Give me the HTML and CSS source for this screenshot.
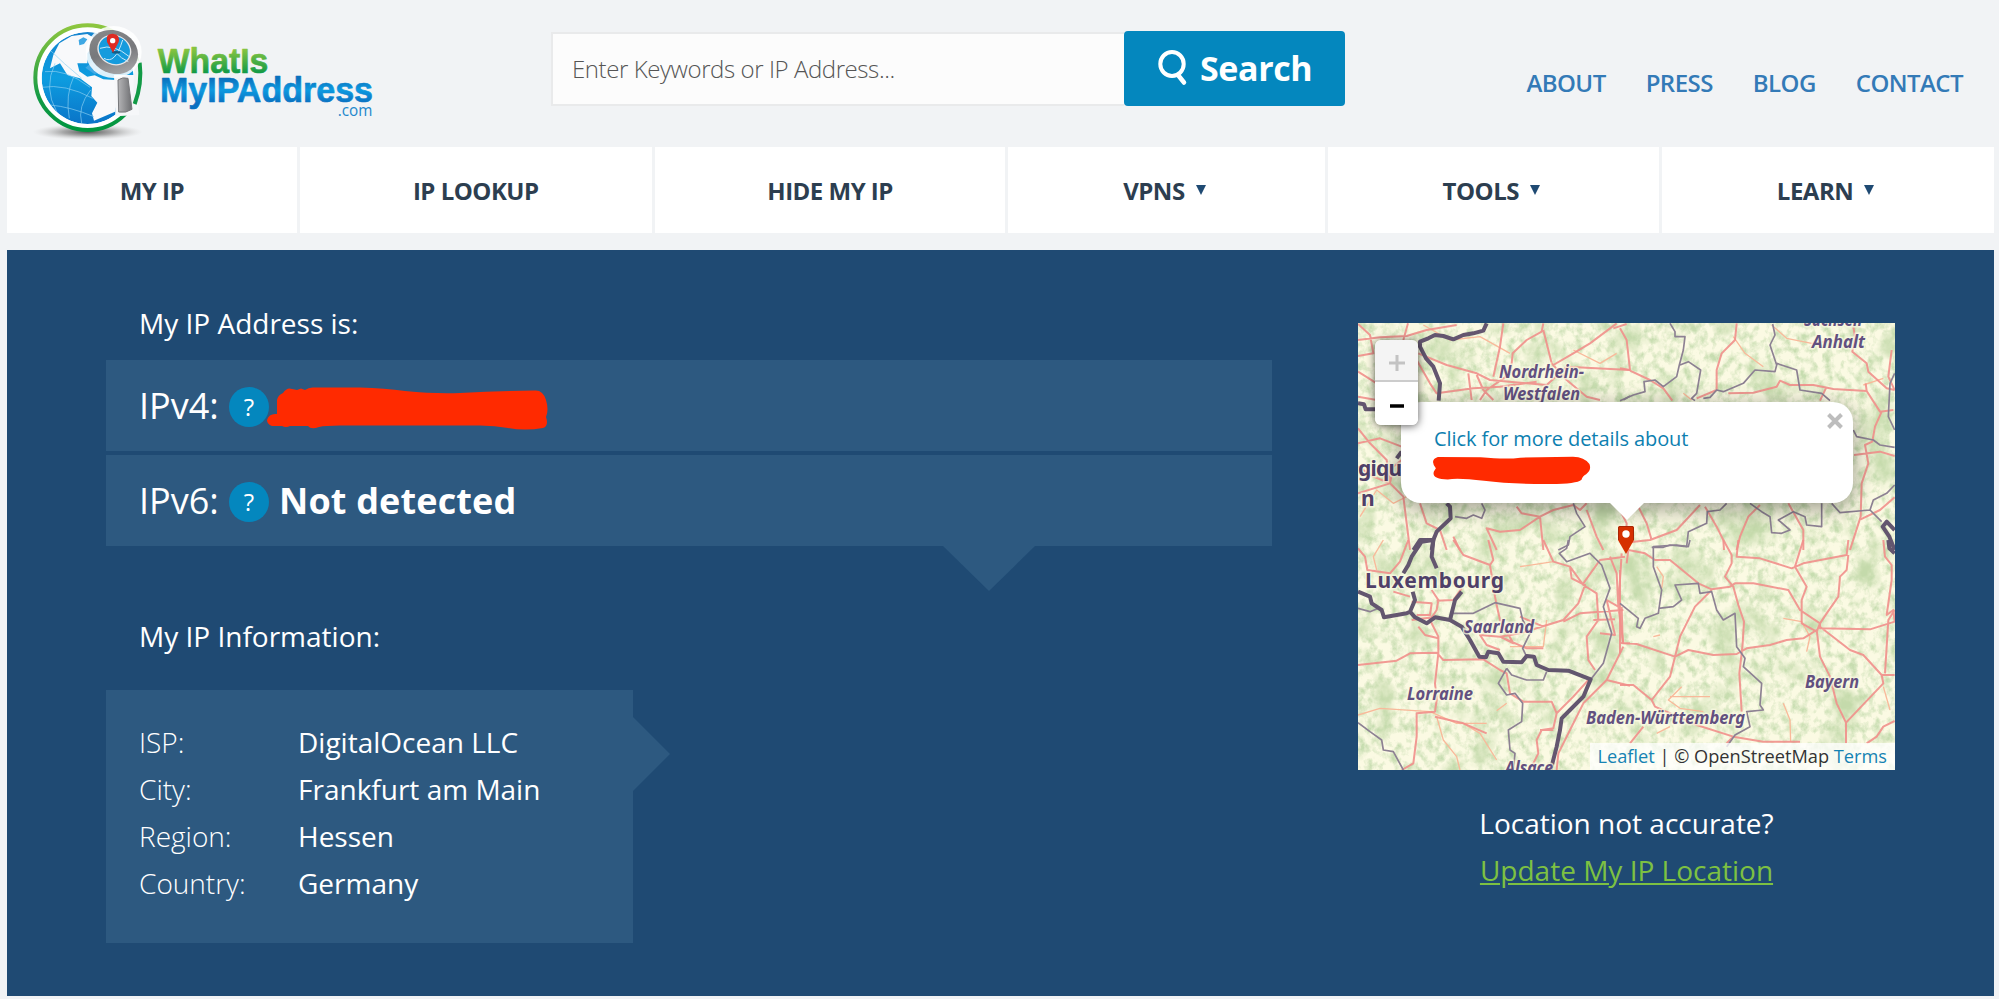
FILE: index.html
```html
<!DOCTYPE html>
<html lang="en">
<head>
<meta charset="utf-8">
<title>What Is My IP Address</title>
<link rel="stylesheet" href="styles.css">
</head>
<body>
<header class="header">
  <a class="logo">
    <svg width="420" height="147" viewBox="0 0 1260 441" role="img" aria-label="WhatIsMyIPAddress.com">
      <defs>
        <linearGradient id="ring" x1="0" y1="0" x2="0" y2="1"><stop offset="0" stop-color="#8dc63f"/><stop offset=".7" stop-color="#129a46"/><stop offset="1" stop-color="#00963f"/></linearGradient>
        <linearGradient id="sea" x1="0" y1="0" x2="0" y2="1"><stop offset="0" stop-color="#1684cf"/><stop offset=".5" stop-color="#0d9de0"/><stop offset="1" stop-color="#0a74c8"/></linearGradient>
        <linearGradient id="steel" x1="0" y1="0" x2="1" y2="1"><stop offset="0" stop-color="#8c8c8e"/><stop offset=".5" stop-color="#77787b"/><stop offset="1" stop-color="#b5b5b7"/></linearGradient>
        <linearGradient id="grip" x1="0" y1="0" x2="1" y2="0"><stop offset="0" stop-color="#b5b5b7"/><stop offset="1" stop-color="#6d6e71"/></linearGradient>
        <linearGradient id="greenText" x1="0" y1="0" x2="0" y2="1"><stop offset=".2" stop-color="#86c440"/><stop offset=".85" stop-color="#0a9847"/></linearGradient>
        <linearGradient id="blueText" x1="0" y1="0" x2="0" y2="1"><stop offset=".2" stop-color="#0a71bd"/><stop offset=".5" stop-color="#0d9ae0"/><stop offset=".85" stop-color="#0a6fc0"/></linearGradient>
        <radialGradient id="shade"><stop offset="0" stop-color="#555"/><stop offset=".45" stop-color="#888" stop-opacity=".7"/><stop offset="1" stop-color="#ccc" stop-opacity="0"/></radialGradient>
        <clipPath id="disc"><circle cx="263" cy="234" r="138"/></clipPath>
      </defs>
      <ellipse cx="263" cy="396" rx="165" ry="24" fill="url(#shade)"/>
      <circle cx="263" cy="233" r="157" fill="#fff" stroke="url(#ring)" stroke-width="12"/>
      <g clip-path="url(#disc)">
        <circle cx="263" cy="234" r="138" fill="url(#sea)"/>
        <path d="M160 165 L150 205 L180 190 L202 225 L240 235 L276 262 L274 288 L292 308 L276 340 L282 362 L345 335 L345 240 L310 238 L284 226 L262 230 L238 214 L232 190 L262 190 L262 160 L292 120 L262 102 L215 108 L178 130 Z" fill="#f8f9fb"/>
        <path d="M236 120l14-8 12 6-10 14-14 4zM256 203l22-18 12 14 20 14-26 10z" fill="#3fa8e4"/>
        <path d="M125 262Q195 250 278 295M135 215Q195 205 270 262M150 315Q210 320 282 350M165 190Q130 265 170 335M222 228Q195 285 208 355M272 270Q232 320 245 370M150 150Q190 190 245 235" fill="none" stroke="#8ed0f2" stroke-width="2"/>
      </g>
      <path d="M342 225h62l14 120-72 4z" fill="#f6f7f9"/>
      <path d="M404 184L430 184L430 300L398 318" fill="#f1f3f5"/>
      <path d="M419 188Q427 250 404 312" fill="none" stroke="#129a46" stroke-width="12"/>
      <ellipse cx="341" cy="156" rx="84" ry="78" fill="#fff" opacity=".85"/>
      <ellipse cx="341" cy="156" rx="75" ry="64" transform="rotate(25 341 156)" fill="url(#steel)"/>
      <ellipse cx="343" cy="150" rx="50" ry="43" transform="rotate(25 343 150)" fill="#159bdd" stroke="#e6e6e8" stroke-width="4"/>
      <path d="M300 145Q340 130 388 170M312 175Q345 195 368 120M330 120Q340 165 385 185" fill="none" stroke="#c5e8fa" stroke-width="3"/>
      <ellipse cx="348" cy="157" rx="13" ry="4" fill="#135c86"/>
      <path d="M339 158L321 126Q315 101 338 101Q361 102 356 126Z" fill="#df2b23"/>
      <circle cx="338" cy="122" r="8" fill="#fff"/>
      <path d="M354 240Q368 230 384 235L396 328Q378 340 356 336Z" fill="url(#grip)" stroke="#77787b" stroke-width="3"/>
      <text class="logo-word" x="473" y="219" font-size="104" textLength="332" lengthAdjust="spacingAndGlyphs" fill="url(#greenText)" stroke="url(#greenText)">WhatIs</text>
      <text class="logo-word" x="480" y="306" font-size="104" textLength="639" lengthAdjust="spacingAndGlyphs" fill="url(#blueText)" stroke="url(#blueText)">MyIPAddress</text>
      <text class="logo-tld" x="1013" y="348" font-size="50" textLength="104" lengthAdjust="spacingAndGlyphs">.com</text>
    </svg>
  </a>
  <form class="search">
    <div class="search-field">Enter Keywords or IP Address...</div>
    <div class="search-button">
      <svg width="30" height="36" viewBox="0 0 30 36"><ellipse cx="14" cy="14" rx="11.7" ry="12" fill="none" stroke="#fff" stroke-width="4"/><path d="M20 25l6 7.500" stroke="#fff" stroke-width="4.500" stroke-linecap="round"/></svg>
      <span>Search</span>
    </div>
  </form>
  <div class="links"><a>ABOUT</a><a>PRESS</a><a>BLOG</a><a>CONTACT</a></div>
</header>

<nav class="nav">
  <a>MY IP</a><a>IP LOOKUP</a><a>HIDE MY IP</a>
  <a>VPNS<i class="caret"></i></a><a>TOOLS<i class="caret"></i></a><a>LEARN<i class="caret"></i></a>
</nav>

<main class="panel">
  <section class="details">
    <h2>My IP Address is:</h2>
    <div class="addresses">
      <div class="address"><span class="label">IPv4:</span><b class="help">?</b>
        <svg class="mark" width="284" height="48" viewBox="265 384 284 48"><path fill="#ff2a00" d="M277 413V400Q278 395 283 393Q287 387 292 389L297 390L301 388.500L305 390Q309 387 314 387.500H360Q385 388 405 391Q435 394 460 393Q500 391 535 390.500Q543 390 546 400Q549 410 546 417Q549 426 543 428Q525 431 508 428Q495 425.500 480 425.500H340Q325 425.500 319 427Q311 430 308 426L290 426Q286 428 282 426H272Q267 424 267 420Q269 413 277 414Z"/></svg>
      </div>
      <div class="address"><span class="label">IPv6:</span><b class="help">?</b><strong>Not detected</strong></div>
    </div>
    <h2 class="info-title">My IP Information:</h2>
    <dl class="info">
      <dt>ISP:</dt><dd>DigitalOcean LLC</dd>
      <dt>City:</dt><dd>Frankfurt am Main</dd>
      <dt>Region:</dt><dd>Hessen</dd>
      <dt>Country:</dt><dd>Germany</dd>
    </dl>
  </section>

  <aside class="location">
    <div class="map">
      <svg class="tiles" width="537" height="447" viewBox="0 0 537 447">
        <defs>
          <filter id="woods" x="0" y="0" width="100%" height="100%" color-interpolation-filters="sRGB">
            <feTurbulence type="fractalNoise" baseFrequency=".12 .1" numOctaves="4" seed="8"/>
            <feColorMatrix values="0 0 0 0 .78  0 0 0 0 .865  0 0 0 0 .69  2.600 0 0 0 -1.100"/>
          </filter>
          <filter id="regions" x="0" y="0" width="100%" height="100%" color-interpolation-filters="sRGB">
            <feTurbulence type="fractalNoise" baseFrequency=".026 .022" numOctaves="5" seed="21"/>
            <feColorMatrix values="0 0 0 0 .77  0 0 0 0 .855  0 0 0 0 .67  0 3 0 0 -1.550"/>
          </filter>
        </defs>
        <rect width="537" height="447" fill="#fbfae3"/>
        <rect width="537" height="447" filter="url(#woods)"/>
        <rect width="537" height="447" filter="url(#regions)"/>
        <!-- north-west -->
        <g transform="translate(-18 -13) scale(.33333)">
          <path class="minor" d="M250 45L330 90L420 80L510 130M700 120L780 160L830 130M60 620L110 540L160 580L200 560"/>
          <path class="road" d="M54 42L90 75L100 130L54 138M54 90L120 82L200 78L260 60L350 45M204 40L190 90M235 130L320 165L410 190L450 210L620 225L680 170L870 180M490 40L480 110L460 200M610 40L605 65L560 90L518 130L512 190L440 240L420 270M610 60L635 160L680 210L740 260L780 270M830 40L750 100L700 130L640 165M860 42L820 55M230 150L270 220L290 250L400 235L480 230L590 215M54 260L110 270M54 185L110 220M410 195L430 240L460 270M385 190L395 270M54 355L90 400L140 450L150 520L190 560L200 640L210 720M54 400L120 385L185 410M54 470L100 500L150 520L160 470L185 450M54 550L150 520M240 580L260 640L300 660L320 720M530 590L545 610L600 620L640 600L700 585L720 600L740 580M600 620L540 660L480 665L440 655L470 720M600 620L610 720M740 600L770 680L790 720M340 680L360 720"/>
          <path class="border" d="M345 620L380 625L400 615L425 625L435 600L425 580M700 580L710 610L735 650L690 680L685 705L655 720M870 258L850 270"/>
          <path class="country" d="M440 40L430 62L400 70L370 75L340 88L310 78L285 75L265 85L240 95L240 110L258 145L280 170L300 220L296 272M54 280L72 283L77 298L110 298M320 580L330 590L332 625L290 665L280 690L240 690L220 720M280 690L275 720M185 425L170 445"/>
        </g>
        <!-- north-east -->
        <g transform="translate(262 -13) scale(.33333)">
          <path class="minor" d="M340 80L375 130L430 170M455 45L500 85L575 100L640 92M190 250L215 270M730 225L790 205"/>
          <path class="road" d="M0 55L20 90L30 180L0 175M30 182L90 210L130 235L157 272M350 40L345 90L305 130L290 180L290 240L230 265M325 250L400 248L470 230L480 212L510 225L580 225L640 237L740 243L737 220M740 243L780 305L820 300M700 50L705 80L697 125L740 160L745 185L800 235L824 240M815 120L805 200L824 240M785 305L765 350L757 395L735 405L745 460L725 520L722 620L690 720M702 435L780 425L824 438M620 230L600 272M824 562L780 600L722 628M55 590L80 640L95 690M0 700L90 690L170 660L240 585M255 590L290 650L310 690L312 720M420 585L385 620L360 680L350 720M505 580L550 660L550 720M0 600L20 640L15 720"/>
          <path class="border" d="M150 40L165 65L165 80L195 80L190 120L178 165L170 200L130 230L105 210L72 215L75 245L40 255L0 272M180 165L205 155L242 180L230 250L215 265L225 272M458 42L465 75L450 105L470 165L465 185L405 180L370 220L310 245L290 240L270 262L250 265M470 160L530 180L540 240L605 250L630 272M824 190L810 220L805 320L824 360M700 360L710 380L760 390L780 405L824 412M635 580L660 608L750 600L760 570L800 550L824 525M750 600L785 635M320 580L300 600L262 605L260 640L205 665L200 710L150 705L130 712L95 712M390 580L425 605L450 620L455 668L485 670L510 660L475 630L520 605L555 620L560 645L605 650L605 580"/>
          <path class="country" d="M824 660L800 635L788 650L808 680L824 720"/>
        </g>
        <!-- south-west -->
        <g transform="translate(-18 217) scale(.33333)">
          <path class="minor" d="M54 525L120 505L270 515L350 550L440 550M290 530L310 600L350 650L360 690M370 550L420 580L470 660M130 0L100 50L110 90M540 80L640 65M620 240L610 320L510 320M500 490L470 512"/>
          <path class="road" d="M54 25L75 50L82 90L150 100L180 65L205 0M340 0L370 45L450 75L465 170L470 195L480 240L520 310L480 290L420 285L440 315L480 330M445 0L460 60L450 75M610 0L640 65L690 80L730 135L770 160L775 240L740 290L745 360L765 390M690 80L695 115L735 135L715 190L670 240L540 280L480 290L560 325L610 325M730 130L780 60L855 50M670 245L720 220L850 210M760 240L825 238M845 40L835 200L850 310L870 310M810 50L830 100L835 200L800 180L825 285L780 280M215 185L275 190L270 225L230 225M160 155L210 170M290 230L215 240M275 150L295 180L290 210L270 240L295 290L295 340L285 430L290 480L285 515L230 520L230 590L220 670L185 690M54 375L170 362L210 340L290 338L310 360L430 358L480 390L500 400L510 460L550 485L635 485L650 520L640 565L605 570L590 600L595 640L570 690M650 520L700 470L745 420M640 570L600 570M650 690L655 640L690 570L730 490L800 420L850 320M800 420L870 437M285 530L370 550L440 580M235 260L255 285L295 295M365 145L340 180L290 182M540 230L610 260"/>
          <path class="border" d="M335 220L400 220L465 188L540 205L548 240L570 280L548 325L560 350M54 205L90 215L115 205M685 0L680 25L658 40L680 65L750 40L785 75L810 145L790 200L815 280L790 370L755 415M500 385L515 405L560 420L610 420L620 395M500 385L475 430L500 465L525 460L548 490L545 545L505 570L510 630L525 640L520 690M54 548L90 575L125 600L130 630L160 635L190 690"/>
          <path class="country" d="M290 85L275 50L280 0L245 5L215 50L205 75L190 100M54 155L90 170L95 190L125 210L132 232L200 220L210 215L225 180L218 155M210 215L225 232L260 250L285 232L330 240L365 260L390 300L418 350L438 352L445 335L475 340L490 365L545 367L560 348L582 350L590 375L625 390L685 392L752 418L730 470L690 510L665 535L660 570L650 620L632 690M365 155L345 180L330 240"/>
        </g>
        <!-- south-east -->
        <g transform="translate(262 217) scale(.33333)">
          <path class="minor" d="M110 80L130 110L125 145M100 290L120 285M185 440L145 480L180 505L250 515M150 470L270 470M490 235L545 245L570 290L560 335M490 490L510 540L512 605M790 440L810 510M110 580L150 560"/>
          <path class="road" d="M20 70L25 30L75 40L105 60L150 60L235 130L275 148L330 140L345 130L400 130L505 150L540 210L600 250L590 275L545 250L545 180L560 140L525 80L550 0M310 0L335 45L335 70L315 110L340 140L355 195L372 245L368 310L365 340L358 400L365 515M355 0L350 50L420 55L515 85L550 70L680 45L685 0M685 45L680 90L660 110L655 170L620 220L600 250L600 265L750 268L824 245L820 210L800 225L815 120L815 75L795 50L790 0M275 150L225 200L180 290L165 350L150 410L95 480L105 500L230 555L340 590L430 605L540 605M0 308L50 312L165 350L205 330L280 345L350 342L380 325L450 315L500 300L550 295L590 270L600 350L630 410L650 490L678 548L678 610M600 260L690 330L730 345L785 405L790 430L678 548M785 405L824 405M824 210L805 240L795 400M0 435L40 435L95 480M70 560L30 610M824 543L790 560L770 590L740 610M5 200L8 310M0 90L0 340M340 590L320 610"/>
          <path class="border" d="M210 0L205 20L170 15L100 20L100 80L125 150L115 220L75 235L60 265L50 260L55 235L0 190M115 205L160 200L185 180L165 135L235 130L240 160L275 155L290 210L310 240L345 220L350 320L375 355L370 380L425 430L420 495L430 510L380 515L390 560L345 585L320 620"/>
          <path class="country" d="M805 0L808 25L824 40"/>
        </g>
        <g class="place">
          <text x="141" y="55" textLength="85" lengthAdjust="spacingAndGlyphs">Nordrhein-</text>
          <text x="145" y="77" textLength="77" lengthAdjust="spacingAndGlyphs">Westfalen</text>
          <text x="446" y="3" textLength="63" lengthAdjust="spacingAndGlyphs">Sachsen-</text>
          <text x="454" y="25" textLength="53" lengthAdjust="spacingAndGlyphs">Anhalt</text>
          <text x="106" y="310" textLength="70" lengthAdjust="spacingAndGlyphs">Saarland</text>
          <text x="49" y="377" textLength="66" lengthAdjust="spacingAndGlyphs">Lorraine</text>
          <text x="147" y="451" textLength="48" lengthAdjust="spacingAndGlyphs">Alsace</text>
          <text x="228" y="401" textLength="159" lengthAdjust="spacingAndGlyphs">Baden-Württemberg</text>
          <text x="447" y="365" textLength="54" lengthAdjust="spacingAndGlyphs">Bayern</text>
        </g>
        <g class="state">
          <text x="7" y="265" textLength="139">Luxembourg</text>
          <text x="0" y="153" textLength="56">gique</text>
          <text x="3" y="183">n</text>
        </g>
      </svg>
      <div class="popup">
        <a>Click for more details about</a>
        <svg class="popup-mark" width="160" height="29" viewBox="275 438 480 88"><path fill="#ff2a00" d="M290 441L420 442Q500 449 540 443L700 440Q735 441 750 462Q757 480 740 493Q729 498 726 510Q710 524 620 523Q510 523 430 513Q350 503 320 509Q270 508 278 485L284 475Q264 450 290 441Z"/></svg>
        <svg class="close" width="16" height="16" viewBox="0 0 16 16"><path d="M1.500 1.500l13 13M14.500 1.500l-13 13" stroke="#bdbdbd" stroke-width="4"/></svg>
        <i class="tip"></i>
      </div>
      <svg class="pin" width="18" height="28" viewBox="0 0 18 28"><path d="M1 2Q1 0 3 0H15Q17 0 17 2V14L9 28L1 14Z" fill="#d63000"/><path d="M1.500 14V2Q1.500 .5 3 .5H15Q16.500 .5 16.500 2V14" fill="none" stroke="#a82705"/><circle cx="9" cy="8" r="3.700" fill="#fff"/></svg>
      <div class="zoom">
        <span class="zoom-in"><svg width="18" height="18" viewBox="0 0 18 18"><path d="M9 1v16M1 9h16" stroke="#c3c3c3" stroke-width="3"/></svg></span>
        <span><svg width="14" height="4" viewBox="0 0 14 4"><path d="M0 2h14" stroke="#000" stroke-width="3.500"/></svg></span>
      </div>
      <div class="credit"><a>Leaflet</a> | © OpenStreetMap <a>Terms</a></div>
    </div>
    <p>Location not accurate?</p>
    <p><a class="update">Update My IP Location</a></p>
  </aside>
</main>
</body>
</html>
```
FILE: styles.css
```css
* { box-sizing: border-box; }
body {
  margin: 0;
  padding: 0 5px 0 7px;
  height: 999px;
  overflow: hidden;
  background: #f1f3f5;
  font-family: "Open Sans", "Noto Sans", sans-serif;
}
.header { display: flex; height: 147px; }
.logo { width: 544px; margin-left: -7px; }
.logo svg { display: block; }
.logo-word { font-family: "Liberation Sans", Arial, sans-serif; font-weight: bold; stroke-width: 2; stroke-linejoin: round; }
.logo-tld { font-family: "Open Sans", sans-serif; fill: #2187cc; }

.search { display: flex; margin: 31px 0 0 7px; height: 75px; }
.search-field {
  width: 573px; padding-left: 19px; margin-top: 1px; height: 74px;
  border: 2px solid #e9eaeb; border-right: 0; background: #fcfcfc;
  font-size: 24px; font-weight: 300; line-height: 70px; letter-spacing: -.42px; color: #555;
}
.search-button {
  display: flex; align-items: center; gap: 12px; width: 221px; padding: 0 0 2px 34px;
  border-radius: 4px; background: #0487be; color: #fff; font-size: 34px; font-weight: 700; letter-spacing: -.4px;
}
.links {
  display: flex; flex: 1; justify-content: flex-end; gap: 40px; padding: 62px 31px 0 0;
  font-size: 24px; font-weight: 600; line-height: 41px; letter-spacing: -.55px; color: #337ab7;
}

.nav { display: grid; grid-template-columns: 290fr 352fr 351fr 317fr 331fr 332fr; gap: 3px; height: 86px; }
.nav a {
  display: flex; align-items: center; justify-content: center; gap: 11px;
  background: #fff; font-size: 24px; font-weight: 700; letter-spacing: -.5px; color: #2c3e50;
}
.caret { margin-right: 5px; border: 5px solid transparent; border-top: 10px solid #1f4a73; border-bottom: 0; }

.panel {
  display: flex; align-items: flex-start; gap: 86px; height: 746px; margin-top: 17px; padding: 53px 99px 0;
  background: #1f4a73; color: #fff; font-size: 28px;
}
.details { width: 1166px; }
h2 { margin: 0 0 17px 33px; font-size: 28px; font-weight: 400; line-height: 40px; }
.addresses { position: relative; display: grid; gap: 4px; }
.addresses::after {
  content: ""; position: absolute; left: 837px; top: 100%;
  border: 46px solid transparent; border-top: 45px solid #2d5980; border-bottom: 0;
}
.address { display: flex; align-items: center; height: 91px; padding-left: 33px; background: #2d5980; font-size: 36px; }
.label { width: 90px; }
.help {
  width: 40px; height: 40px; margin-top: 3px; border-radius: 50%; background: #0487be;
  font-size: 24px; font-weight: 400; line-height: 40px; text-align: center;
}
.mark { margin: 5px 0 0 -4px; }
.address strong { margin-left: 10px; letter-spacing: .15px; }
.info-title { margin: 70px 0 34px 33px; }
.info {
  position: relative; display: grid; grid-template-columns: 159px 1fr; align-content: start;
  width: 527px; height: 253px; margin: 0; padding: 29px 0 0 33px; background: #2d5980; line-height: 47px;
}
.info::after {
  content: ""; position: absolute; left: 100%; top: 27px;
  border: 37px solid transparent; border-left: 37px solid #2d5980; border-right: 0;
}
.info dt { font-weight: 300; }
.info dd { margin: 0; }

.location { width: 537px; margin-top: 20px; text-align: center; }
.location p { margin: 0; line-height: 47px; }
.update { color: #7dc142; text-decoration: underline; }
.map { position: relative; height: 447px; margin-bottom: 30px; overflow: hidden; }
.tiles { display: block; }
.road { fill: none; stroke: #f18f8b; stroke-width: 6; stroke-linejoin: round; opacity: .9; }
.minor { fill: none; stroke: #f9b99a; stroke-width: 4; stroke-linejoin: round; }
.border { fill: none; stroke: #8d8193; stroke-width: 5; stroke-linejoin: round; }
.country { fill: none; stroke: #63566f; stroke-width: 12; stroke-linejoin: round; }
.place text, .state text { paint-order: stroke; stroke: #fbfae3; stroke-opacity: .75; stroke-width: 3; fill: #625080; }
.place { font: italic 700 17px "Noto Sans", "Open Sans", sans-serif; }
.state { font: 700 21px "Noto Sans", "Open Sans", sans-serif; }
.state text { fill: #4f4068; }
.popup {
  position: absolute; left: 43px; top: 79px; width: 452px; height: 101px; padding: 19px 0 0 33px;
  border-radius: 20px; background: #fff; box-shadow: 0 5px 22px rgba(0,0,0,.4);
  font-size: 20px; line-height: 36px; letter-spacing: -.08px; text-align: left; color: #0d80b0;
}
.popup a { display: block; }
.popup-mark { display: block; margin: -1px 0 0 -2px; }
.close { position: absolute; right: 10px; top: 11px; }
.tip { position: absolute; left: 209px; top: 100%; border: 17px solid transparent; border-top-color: #fff; border-bottom: 0; }
.pin { position: absolute; left: 259px; top: 203px; }
.zoom { position: absolute; left: 17px; top: 17px; width: 43px; border-radius: 6px; overflow: hidden; box-shadow: 0 1px 8px rgba(0,0,0,.65); }
.zoom span { display: flex; align-items: center; justify-content: center; height: 43px; padding: 5px 0 0 1px; background: #fff; }
.zoom .zoom-in { height: 42px; background: #f4f4f4; border-bottom: 2px solid #ccc; }
.credit {
  position: absolute; right: 0; bottom: 0; height: 27px; padding: 0 8px; background: rgba(255,255,255,.75);
  font-size: 18.200px; line-height: 27px; white-space: nowrap; color: #333;
}
.credit a { color: #1583b3; }
```
